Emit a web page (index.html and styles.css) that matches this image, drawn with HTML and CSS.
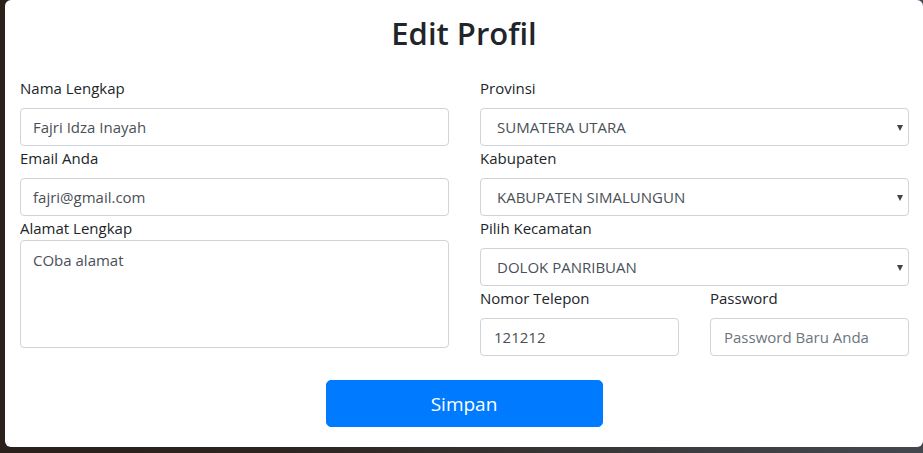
FILE: index.html
```html
<!DOCTYPE html>
<html lang="id">
<head>
<meta charset="utf-8">
<title>Edit Profil</title>
<link rel="stylesheet" href="styles.css">
</head>
<body>
<div class="backdrop">
  <div class="modal">
    <h3 class="title">Edit Profil</h3>
    <form class="form">
      <div class="col">
        <label class="label">Nama Lengkap</label>
        <input class="control" type="text" value="Fajri Idza Inayah">
        <label class="label">Email Anda</label>
        <input class="control" type="text" value="fajri@gmail.com">
        <label class="label label-tight">Alamat Lengkap</label>
        <textarea class="control area">COba alamat</textarea>
      </div>
      <div class="col">
        <label class="label">Provinsi</label>
        <div class="select-wrap"><select class="control select"><option>SUMATERA UTARA</option></select></div>
        <label class="label">Kabupaten</label>
        <div class="select-wrap"><select class="control select"><option>KABUPATEN SIMALUNGUN</option></select></div>
        <label class="label">Pilih Kecamatan</label>
        <div class="select-wrap"><select class="control select"><option>DOLOK PANRIBUAN</option></select></div>
        <div class="pair">
          <div class="sub">
            <label class="label">Nomor Telepon</label>
            <input class="control" type="text" value="121212">
          </div>
          <div class="sub">
            <label class="label">Password</label>
            <input class="control" type="password" placeholder="Password Baru Anda">
          </div>
        </div>
      </div>
    </form>
    <div class="actions">
      <button class="btn" type="button">Simpan</button>
    </div>
  </div>
</div>
</body>
</html>
```
FILE: styles.css
```css
html, body {
  margin: 0;
  padding: 0;
}
body {
  width: 923px;
  height: 453px;
  overflow: hidden;
  background: linear-gradient(90deg, #2a211c 0%, #2d241f 30%, #3a3a3c 70%, #44484e 100%);
  font-family: "Segoe UI", "Open Sans", "Noto Sans", sans-serif;
  color: #212529;
}
.backdrop {
  padding-left: 5px;
}
.modal {
  width: 918px;
  height: 447px;
  background: #fff;
  border-radius: 6px;
  box-sizing: border-box;
  padding-top: 15px;
}
.title {
  margin: 0 0 25px;
  text-align: center;
  font-size: 31px;
  font-weight: 600;
  line-height: 36px;
  color: #212529;
}
.form {
  display: grid;
  grid-template-columns: 429px 429px;
  column-gap: 31px;
  padding: 0 14px 0 15px;
  margin: 0;
}
.col {
  display: flex;
  flex-direction: column;
}
.label {
  display: block;
  font-size: 15px;
  line-height: 24px;
  margin-bottom: 8px;
  color: #212529;
}
.label-tight {
  margin-bottom: 0;
}
.control {
  display: block;
  box-sizing: border-box;
  width: 100%;
  height: 38px;
  margin: 0;
  padding: 6px 12px;
  font-family: inherit;
  font-size: 15px;
  line-height: 24px;
  color: #495057;
  background: #fff;
  border: 1px solid #ced4da;
  border-radius: 4px;
  outline: none;
}
.control::placeholder {
  color: #6c757d;
}
.area {
  height: 108px;
  resize: none;
  padding-top: 7px;
}
.select-wrap {
  position: relative;
}
.select {
  appearance: none;
  -webkit-appearance: none;
  padding-left: 16px;
}
.select-wrap::after {
  content: "";
  position: absolute;
  right: 6px;
  top: 17px;
  border-left: 3.5px solid transparent;
  border-right: 3.5px solid transparent;
  border-top: 6px solid #444;
  pointer-events: none;
}
.pair {
  display: grid;
  grid-template-columns: 199px 199px;
  column-gap: 31px;
}
.sub .control {
  padding-left: 13px;
}
.actions {
  display: flex;
  justify-content: center;
  margin-top: 24px;
}
.btn {
  width: 277px;
  height: 47px;
  background: #007bff;
  color: #fff;
  border: 1px solid #007bff;
  border-radius: 5px;
  font-family: inherit;
  font-size: 19px;
  line-height: 28px;
  padding: 8px 16px;
  cursor: pointer;
}
```
